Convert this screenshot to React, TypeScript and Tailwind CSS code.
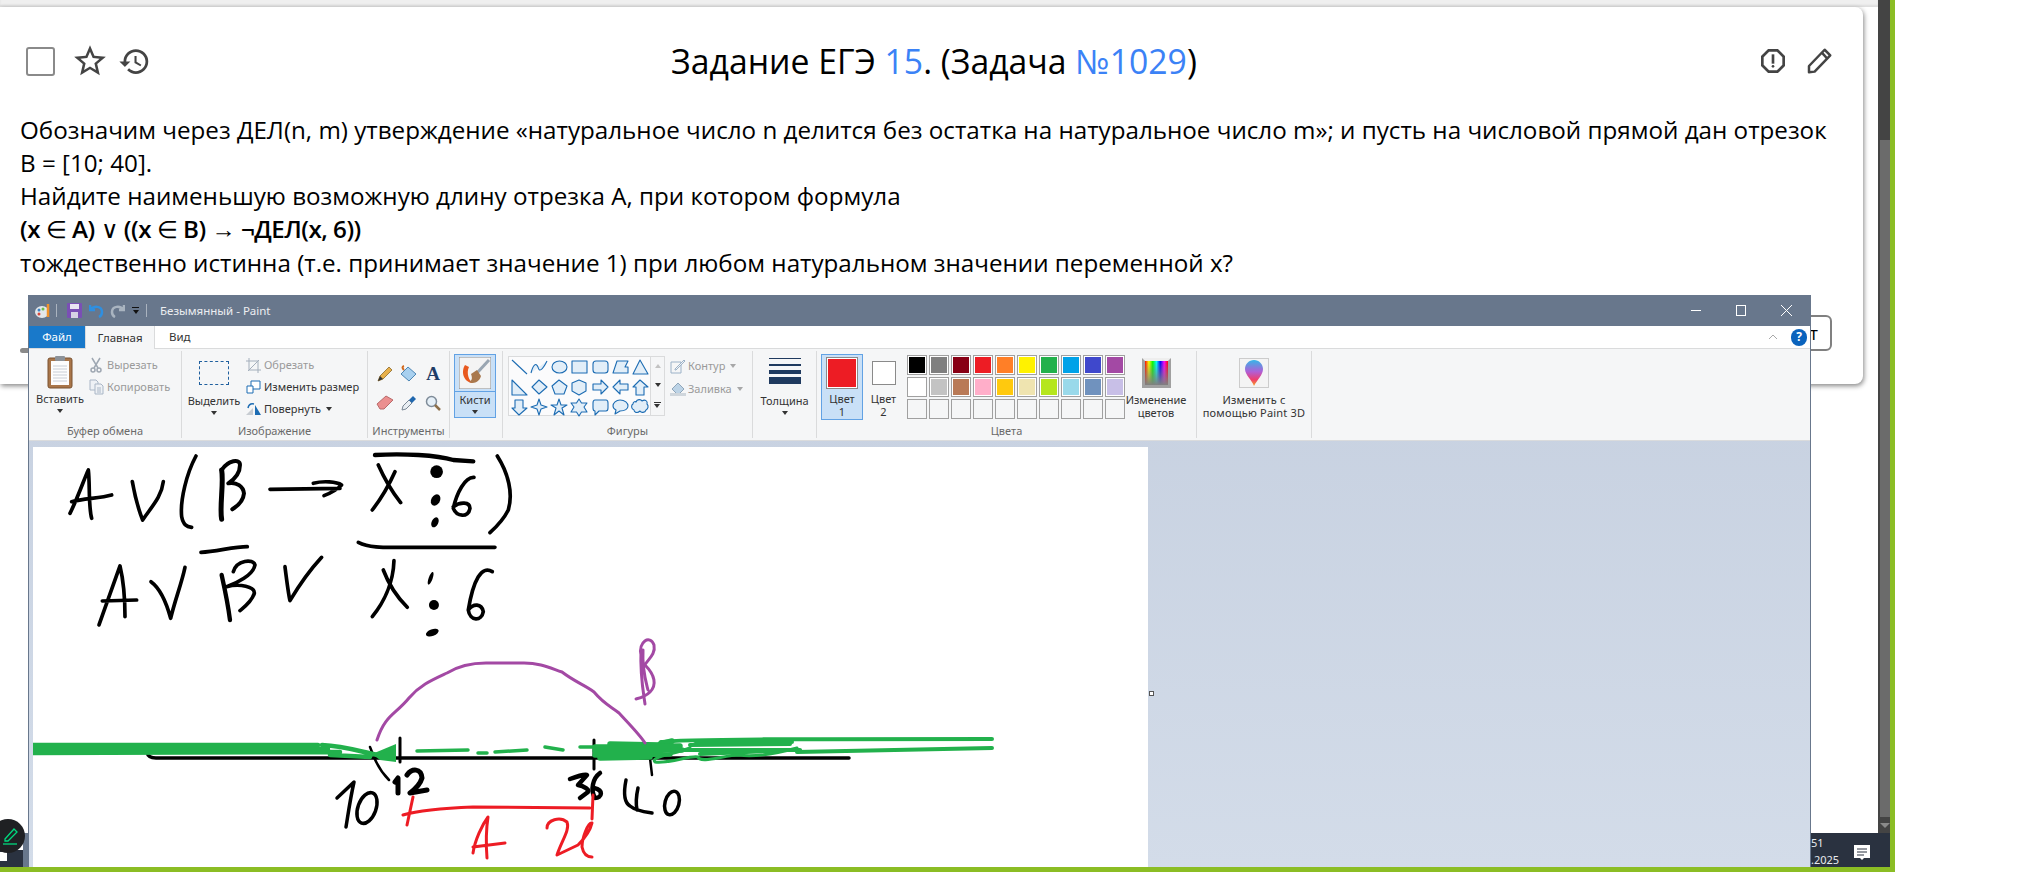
import type { ReactNode } from 'react';
import { MdHistory, MdOutlineReport, MdStarBorder } from 'react-icons/md';

const row1 = ['#000000', '#7f7f7f', '#880015', '#ed1c24', '#ff7f27', '#fff200', '#22b14c', '#00a2e8', '#3f48cc', '#a349a4'];
const row2 = ['#ffffff', '#c3c3c3', '#b97a57', '#ffaec9', '#ffc90e', '#efe4b0', '#b5e61d', '#99d9ea', '#7092be', '#c8bfe7'];
const row3 = ['', '', '', '', '', '', '', '', '', ''];

// paths of the gallery shapes, each on a 20x20 box
const shapes = [
  'M3 3L18 17',
  'M2 16C4 8 7 5 9 10C10 15 13 14 18 4',
  'M3 10a7.500 6 0 1 0 15 0a7.500 6 0 1 0 -15 0Z',
  'M3 4H18V16H3Z',
  'M6 4H15Q18 4 18 7V13Q18 16 15 16H6Q3 16 3 13V7Q3 4 6 4Z',
  'M3 16L7 4H18L15 10H18V16Z',
  'M10 3L18 17H3Z',
  'M3 3L18 18H3Z',
  'M10 3L18 10L10 17L3 10Z',
  'M10 3L18 9L15 17H6L3 9Z',
  'M10 3L17 6V14L10 18L3 14V6Z',
  'M3 7H11V3L18 10L11 17V13H3Z',
  'M18 7H10V3L3 10L10 17V13H18Z',
  'M10 3L18 10H14V18H6V10H3Z',
  'M6 3H14V11H18L10 18L3 11H6Z',
  'M10 2L12 8L18 10L12 12L10 18L8 12L2 10L8 8Z',
  'M10 2L12 8H18L13 11L15 18L10 14L5 18L7 11L2 8H8Z',
  'M10 2L12.500 6H18L15 10L18 15H12.500L10 19L7.500 15H2L5 10L2 6H7.500Z',
  'M5 3H16Q18 3 18 6V11Q18 14 16 14H9L5 18V14Q3 14 3 11V6Q3 3 5 3Z',
  'M10 3C15 3 18 6 18 9C18 12 15 14 10 14L5 17L6 13C4 12 3 11 3 9C3 6 6 3 10 3Z',
  'M6 5C7 2 11 2 12 4C15 2 18 4 17 7C19 9 18 12 16 13C15 16 11 16 10 14C7 17 4 15 4 13C1 12 1 8 3 7C3 5 5 4 6 5Z',
];

function Ink({ d, w = 11, c = '#000000' }: { d: string; w?: number; c?: string }) {
  return <path d={d} fill="none" stroke={c} strokeWidth={w} strokeLinecap="round" strokeLinejoin="round" />;
}

function Drawing() {
  return (
    <svg className="absolute left-0 top-0" width="1115" height="420" viewBox="33 447 1115 420">
      {/* formula lines, in 3x coordinates */}
      <g transform="translate(20 440) scale(0.3333)">
        <Ink d="M150 220C175 170 195 110 205 90C210 130 205 200 215 235M155 185C190 175 240 175 275 165" />
        <Ink d="M337 125C345 170 360 220 368 240C395 200 425 170 430 125" />
        <Ink d="M528 48C500 100 480 180 485 230C490 255 500 260 515 262" />
        <Ink d="M605 90C612 130 598 200 605 238" w={15} />
        <Ink d="M605 90C625 60 660 55 660 75C660 100 640 120 625 130C650 125 670 140 672 160C670 185 650 200 637 208" w={12} />
        <Ink d="M750 148L960 145M880 130C910 122 950 125 965 135C950 150 930 160 912 167" />
        <Ink d="M1075 75C1095 120 1120 160 1142 188M1125 95C1105 140 1080 180 1057 210" />
        <Ink d="M1065 45C1150 40 1250 45 1300 60L1360 64" w={13} />
        <ellipse cx="1250" cy="95" rx="19" ry="19" />
        <ellipse cx="1247" cy="180" rx="13" ry="18" transform="rotate(30 1247 180)" />
        <ellipse cx="1245" cy="247" rx="10" ry="16" transform="rotate(25 1245 247)" />
        <Ink d="M1362 112C1335 110 1310 160 1300 205C1310 230 1345 235 1350 205C1350 185 1320 185 1300 200" />
        <Ink d="M1432 48C1465 100 1480 160 1465 210C1450 240 1430 260 1410 278" />
        <Ink d="M237 555C260 490 285 420 300 378C310 420 315 480 315 530M247 483L350 480" />
        <Ink d="M393 425C420 445 440 490 452 535C465 480 485 430 495 382" />
        <Ink d="M543 337C590 335 640 320 682 320" />
        <Ink d="M605 405C615 450 625 500 630 540" w={13} />
        <Ink d="M640 395C650 360 700 355 705 375C700 405 650 430 620 440C660 430 705 440 703 460C695 485 675 500 660 512" />
        <Ink d="M795 380C800 420 805 460 810 482C835 440 870 390 905 352" />
        <Ink d="M1015 307C1050 325 1100 322 1150 322L1425 322" />
        <Ink d="M1090 390C1105 430 1130 470 1162 502M1122 362C1120 430 1090 490 1057 530" />
        <ellipse cx="1232" cy="415" rx="6" ry="20" transform="rotate(20 1232 415)" />
        <ellipse cx="1242" cy="495" rx="15" ry="15" />
        <ellipse cx="1237" cy="578" rx="20" ry="10" transform="rotate(-20 1237 578)" />
        <Ink d="M1417 395C1385 375 1360 420 1345 510C1350 545 1385 545 1390 515C1385 490 1360 490 1345 510" />
      </g>
      {/* number line */}
      <Ink d="M147 752Q148 758 156 758L849 758" w={3.500} />
      <Ink d="M400 738V762M594 740V769" w={3} />
      <Ink d="M370 747L374 757C378 767 384 775 389 780M650 758L652 775" w={2.500} />
      <Ink d="M33 745L318 745M33 749L328 749M33 753L340 752M322 745C345 746 362 752 378 755M330 755L370 757" w={4.500} c="#22b14c" />
      <path d="M372 754L396 744V762L380 760Z" fill="#22b14c" />
      <Ink d="M417 751L468 750M478 753L487 753M495 752L527 750M545 747L563 750M580 747L592 747" w={3.500} c="#22b14c" />
      <Ink d="M595 747L680 746M595 751L682 750M595 755L670 754M600 758L650 757M610 744L660 745M660 744L672 741" w={5.500} c="#22b14c" />
      <Ink d="M661 742C680 739 800 739 992 739M695 741L792 742M690 745L790 744M797 752L992 748M672 750L800 750M700 754L770 751" w={4} c="#22b14c" />
      <Ink d="M690 748C670 755 650 757 655 762C670 764 690 755 698 757C700 764 725 755 739 755C750 757 770 755 797 748" w={3} c="#22b14c" />
      <Ink d="M377 740C385 715 395 715 409 698C420 685 432 680 447 673C460 665 475 663 486 663H524C540 663 550 668 562 672C575 682 585 685 594 692C605 705 612 707 619 713C630 725 640 735 645 743" w={3} c="#a349a4" />
      <Ink d="M641 650C640 675 643 690 645 704M643 650C642 670 646 682 648 690M641 655C638 642 650 634 654 645C656 655 647 660 645 665C655 675 657 685 650 692C645 697 640 698 636 699" w={3} c="#a349a4" />
      {/* labels */}
      <Ink d="M337 798L354 782C350 800 348 815 346 827" w={3.500} />
      <ellipse cx="367" cy="808" rx="9" ry="16" fill="none" stroke="#000000" strokeWidth="3.500" transform="rotate(20 367 808)" />
      <Ink d="M395 782L398 778V793M407 775C412 768 421 768 422 778C420 785 414 790 410 793L427 790" w={5} />
      <Ink d="M570 779C578 776 586 774 587 775L578 785C584 786 590 790 588 792L580 798" w={4.500} />
      <Ink d="M600 773C593 778 590 790 595 798C602 798 604 790 594 788" w={4.500} />
      <Ink d="M626 780C623 795 625 803 630 806C636 811 645 812 652 813M638 788C636 797 636 805 637 810" w={3.500} />
      <ellipse cx="672" cy="803" rx="7" ry="12" fill="none" stroke="#000000" strokeWidth="3.500" transform="rotate(15 672 803)" />
      <Ink d="M413 797L407 825M403 815C420 810 447 808 473 807L590 808M593 795L592 819" w={3} c="#ed1c24" />
      <Ink d="M473 853C475 840 482 825 488 817C486 830 486 845 487 858M473 847L505 843" w={3} c="#ed1c24" />
      <Ink d="M547 828C547 820 560 816 567 822C570 830 562 840 557 855L578 845C585 838 590 832 592 823C588 822 582 838 582 847C583 852 586 857 592 857" w={3} c="#ed1c24" />
    </svg>
  );
}

function Caret() {
  return <span className="h-0 w-0 border-x-[3.500px] border-t-[4px] border-x-transparent border-t-[#333333]" />;
}

function Group({ w, label, children }: { w: string; label: string; children: ReactNode }) {
  return (
    <div className={`${w} mt-[2px] flex h-[87px] flex-col border-r border-[#dadbdc]`}>
      <div className="flex h-[73px] pt-[3px]">{children}</div>
      <div className="text-center text-[11px] leading-[14px] text-[#6a6a6a]">{label}</div>
    </div>
  );
}

function BigLabel({ lines, caret }: { lines: string[]; caret?: boolean }) {
  return (
    <div className="flex flex-col items-center text-center leading-[13px]">
      {lines.map((l) => (
        <span key={l} className="whitespace-nowrap">{l}</span>
      ))}
      {caret && <span className="mt-[4px] flex"><Caret /></span>}
    </div>
  );
}

function SmallItem({ icon, label, off, caret }: { icon: ReactNode; label: string; off?: boolean; caret?: boolean }) {
  return (
    <div className={`flex h-[22px] items-center gap-[3px] whitespace-nowrap ${off ? 'text-[#9a9a9a]' : 'text-[#333333]'}`}>
      <span className="flex w-4 justify-center">{icon}</span>
      {label}
      {caret && <span className="ml-[2px] flex"><Caret /></span>}
    </div>
  );
}

function Ribbon() {
  return (
    <div className="flex h-[92px] border-b border-[#dadbdc] bg-[#f5f6f7] text-[11px] text-[#333333]">
      <Group w="w-[153px]" label="Буфер обмена">
        <div className="ml-[2px] flex w-[58px] flex-col items-center">
          <svg width="28" height="34" viewBox="0 0 28 34" className="mt-[1px] mb-[3px]">
            <rect x="2" y="3" width="24" height="30" rx="2" fill="#a9764a" stroke="#7a5230" />
            <rect x="5" y="6" width="18" height="24" fill="#fdfdfd" />
            <path d="M7 11H21M7 14H21M7 17H21M7 20H21M7 23H21M7 26H21" stroke="#c9ced6" />
            <rect x="9" y="1" width="10" height="5" rx="1" fill="#8d9298" />
          </svg>
          <BigLabel lines={['Вставить']} caret />
        </div>
        <div className="-ml-[1px] flex flex-col">
          <SmallItem off label="Вырезать" icon={
            <svg width="12" height="16" viewBox="0 0 12 16" fill="none" stroke="#9ea7b2" strokeWidth="1.500"><path d="M2 1L8 11M10 1L4 11" /><circle cx="3" cy="13" r="2" /><circle cx="9" cy="13" r="2" /></svg>
          } />
          <SmallItem off label="Копировать" icon={
            <svg width="15" height="16" viewBox="0 0 15 16" fill="#eef1f5" stroke="#a9b6c6"><path d="M1 1H7L9 3V11H1Z" /><path d="M6 5H12L14 7V15H6Z" /><path d="M8 9H12M8 11H12M8 13H12" /></svg>
          } />
        </div>
      </Group>
      <Group w="w-[186px]" label="Изображение">
        <div className="ml-[2px] flex w-[60px] flex-col items-center">
          <div className="mt-[7px] mb-[9px] h-[24px] w-[30px] border border-dashed border-[#1e5f9e]" />
          <BigLabel lines={['Выделить']} caret />
        </div>
        <div className="ml-[1px] flex flex-col">
          <SmallItem off label="Обрезать" icon={
            <svg width="15" height="15" viewBox="0 0 15 15" fill="none" stroke="#a4afbc"><path d="M3 0V12H15M0 3H12V15M2 13L13 2" /></svg>
          } />
          <SmallItem label="Изменить размер" icon={
            <svg width="15" height="14" viewBox="0 0 15 14" fill="#ffffff" stroke="#1c6cb3"><path d="M5 1H14V9H5Z" /><path d="M1 6H7V13H1Z" /></svg>
          } />
          <SmallItem caret label="Повернуть" icon={
            <svg width="15" height="14" viewBox="0 0 15 14"><path d="M0 13L7 13L7 6Z" fill="#c7ccd2" /><path d="M9 13H15L9 3Z" fill="#1c6cb3" /><path d="M2 6Q3 1 8 2" fill="none" stroke="#1c6cb3" strokeWidth="1.500" /></svg>
          } />
        </div>
      </Group>
      <Group w="w-[82px]" label="Инструменты">
        <div className="mt-[5px] ml-[5px] grid h-[58px] w-[72px] grid-cols-3 grid-rows-2 place-items-center">
          <svg width="16" height="16" viewBox="0 0 16 16"><path d="M1 15L3 10L12 1L15 4L6 13Z" fill="#e8b04a" stroke="#8a6a2a" strokeWidth="0.800" /><path d="M1 15L3 10L6 13Z" fill="#333333" /></svg>
          <svg width="18" height="18" viewBox="0 0 18 18"><path d="M1 9L8 2L16 9L9 16Z" fill="#a8d0ef" stroke="#4d86b5" /><path d="M4 5Q1 2 4 1" fill="none" stroke="#d2691e" strokeWidth="2" /></svg>
          <span className="font-['Liberation_Serif',serif] text-[19px] font-bold leading-none text-[#1f3c66]">A</span>
          <svg width="18" height="15" viewBox="0 0 18 15"><path d="M1 9L10 1L17 5L8 14L4 14Z" fill="#eb8f8f" stroke="#b86a6a" /></svg>
          <svg width="16" height="16" viewBox="0 0 16 16"><path d="M1 15L2 11L8 5L11 8L5 14Z" fill="#e9eef3" stroke="#7b8895" /><path d="M8 5L12 1L15 4L11 8Z" fill="#2067ae" /></svg>
          <svg width="16" height="16" viewBox="0 0 16 16" fill="none"><circle cx="6.500" cy="6.500" r="5" fill="#e6f0f8" stroke="#7f8c99" strokeWidth="1.500" /><path d="M10 10L15 15" stroke="#8d6f4a" strokeWidth="2.500" /></svg>
        </div>
      </Group>
      <Group w="w-[53px]" label="">
        <div className="ml-[4px] h-[64px] w-[42px] border border-[#62a2e4] bg-[#c9e0f7]">
          <div className="flex h-[37px] items-center justify-center border-b border-[#62a2e4]">
            <svg width="32" height="32" viewBox="0 0 32 32">
              <rect width="32" height="32" fill="#f4f4f4" stroke="#8a8a8a" />
              <path d="M6 8C1 16 6 26 14 26C10 24 7 16 10 10Z" fill="#e8591f" />
              <path d="M30 3L18 16" stroke="#9aa6b2" strokeWidth="3" />
              <path d="M12 17L18 13L22 19C20 26 14 27 10 25C14 23 13 20 12 17Z" fill="#a9784d" />
            </svg>
          </div>
          <div className="mt-[1px]"><BigLabel lines={['Кисти']} caret /></div>
        </div>
      </Group>
      <Group w="w-[250px]" label="Фигуры">
        <div className="mt-[2px] ml-[5px] flex h-[60px]">
          <div className="grid h-[60px] w-[143px] grid-cols-7 border border-[#dadbdc] bg-[#fbfbfc]">
            {shapes.map((d) => (
              <svg key={d} width="20" height="20" viewBox="0 0 20 20">
                <path d={d} fill="#e2eef8" stroke="#1c6cb3" strokeWidth="1.100" strokeLinejoin="round" />
              </svg>
            ))}
          </div>
          <div className="flex h-[60px] w-[14px] flex-col items-center justify-around border border-l-0 border-[#dadbdc] text-[#555555]">
            <span className="h-0 w-0 border-x-[3.500px] border-b-[4px] border-x-transparent border-b-[#c2c2c2]" />
            <Caret />
            <span className="flex flex-col gap-[1px]"><span className="h-px w-[7px] bg-[#333333]" /><Caret /></span>
          </div>
        </div>
        <div className="mt-0 ml-[5px] flex flex-col text-[#9a9a9a]">
          <div className="flex h-[24px] items-center gap-[2px]">
            <svg width="16" height="16" viewBox="0 0 16 16" fill="none" stroke="#9cb2c8"><path d="M1 4H11V15H1Z" /><path d="M5 11L14 2L15 3L6 12H5Z" fill="#f2f4f6" /></svg>
            <span>Контур</span><span className="ml-[3px] flex opacity-40"><Caret /></span>
          </div>
          <div className="flex h-[22px] items-center gap-[2px]">
            <svg width="16" height="16" viewBox="0 0 16 16"><path d="M2 8L8 2L14 8L8 14Z" fill="#bcd3e6" stroke="#8fa6ba" /><rect y="12" width="16" height="3" fill="#cfd6dc" /></svg>
            <span>Заливка</span><span className="ml-[3px] flex opacity-40"><Caret /></span>
          </div>
        </div>
      </Group>
      <Group w="w-[64px]" label="">
        <div className="flex w-full flex-col items-center">
          <div className="mt-[4px] mb-[10px] flex w-[32px] flex-col">
            <div className="h-px bg-[#1f3a5f]" />
            <div className="mt-[5px] h-[2px] bg-[#1f3a5f]" />
            <div className="mt-[4px] h-[4px] bg-[#1f3a5f]" />
            <div className="mt-[3px] h-[7px] bg-[#1f3a5f]" />
          </div>
          <BigLabel lines={['Толщина']} caret />
        </div>
      </Group>
      <Group w="w-[380px]" label="Цвета">
        <div className="ml-[4px] flex h-[66px] w-[42px] flex-col items-center border border-[#62a2e4] bg-[#c9e0f7] pt-[2px]">
          <div className="mb-[3px] flex h-[32px] w-[32px] items-center justify-center border border-[#8a8a8a] bg-white">
            <div className="h-[28px] w-[28px] bg-[#ed1c24]" />
          </div>
          <BigLabel lines={['Цвет', '1']} />
        </div>
        <div className="flex w-[41px] flex-col items-center pt-[7px]">
          <div className="mb-[7px] h-[24px] w-[24px] border border-[#8a8a8a] bg-white" />
          <BigLabel lines={['Цвет', '2']} />
        </div>
        <div className="ml-[3px] mt-[1px] flex flex-col gap-[2px]">
          {[row1, row2, row3].map((row, r) => (
            <div key={r} className="flex gap-[2px]">
              {row.map((c, i) => (
                <div key={i} className="flex h-[20px] w-[20px] items-center justify-center border border-[#a0a0a0] bg-white">
                  {c ? <div className="h-[16px] w-[16px]" style={{ backgroundColor: c }} /> : <div className="h-[18px] w-[18px] bg-[#f5f6f7]" />}
                </div>
              ))}
            </div>
          ))}
        </div>
        <div className="ml-[2px] flex w-[58px] flex-col items-center">
          <div className="mt-[4px] mb-[5px] h-[30px] w-[29px] border-[3px] border-[#a0a0a0] border-t-[#eeeeee] bg-[linear-gradient(to_bottom,transparent,#808080),linear-gradient(to_right,#f00,#ff0,#0f0,#0ff,#00f,#f0f,#f00)]" />
          <BigLabel lines={['Изменение', 'цветов']} />
        </div>
      </Group>
      <Group w="w-[115px]" label="">
        <div className="flex w-full flex-col items-center">
          <div className="mt-[4px] mb-[5px] flex h-[30px] w-[30px] items-center justify-center border border-[#cccccc] bg-[#f4f4f4]">
            <svg width="18" height="26" viewBox="0 0 18 26">
              <defs>
                <linearGradient id="balloon" x1="0" y1="0" x2="0" y2="1">
                  <stop offset="0" stopColor="#35b6e8" />
                  <stop offset="0.450" stopColor="#b05fd6" />
                  <stop offset="0.750" stopColor="#ef3f6e" />
                  <stop offset="1" stopColor="#f5a623" />
                </linearGradient>
              </defs>
              <path d="M9 0C14 0 18 4 18 9C18 15 12 20 9 26C7 20 0 15 0 9C0 4 4 0 9 0Z" fill="url(#balloon)" />
            </svg>
          </div>
          <span className="tracking-[0.2px]"><BigLabel lines={['Изменить с', 'помощью Paint 3D']} /></span>
        </div>
      </Group>
    </div>
  );
}

function PaintWindow() {
  return (
    <div className="absolute left-[28px] top-[295px] flex h-[572px] w-[1783px] flex-col border-x border-[#68778c] bg-gradient-to-b from-[#c5cfdf] to-[#d3dce9] font-['Noto_Sans',sans-serif]">
      <div className="-mx-px flex h-[31px] items-center bg-[#68778c] pl-[7px] text-[11.500px] text-[#eceef1]">
        <svg width="16" height="16" viewBox="0 0 16 16">
          <ellipse cx="7" cy="9" rx="7" ry="6" fill="#e3e7ea" />
          <circle cx="4" cy="7" r="1.500" fill="#3b82c4" />
          <circle cx="8" cy="6" r="1.500" fill="#6abf4b" />
          <circle cx="4" cy="11" r="1.500" fill="#d9483b" />
          <path d="M13 1V14" stroke="#f0922b" strokeWidth="2.500" />
        </svg>
        <span className="ml-[5px] h-[13px] w-px bg-[#aab3bf]" />
        <svg className="ml-[10px]" width="15" height="15" viewBox="0 0 15 15">
          <rect width="15" height="15" rx="1" fill="#7a4fb5" />
          <rect x="3" y="1" width="9" height="5" fill="#e8e4f2" />
          <rect x="4" y="9" width="7" height="6" fill="#d6d2e4" />
        </svg>
        <svg className="ml-[7px]" width="15" height="14" viewBox="0 0 15 14" fill="none"><path d="M1 1V6H6M1 6C5 1 13 2 13 8C13 10 12 12 10 13" stroke="#2f8fe0" strokeWidth="2.500" /></svg>
        <svg className="ml-[6px]" width="15" height="14" viewBox="0 0 15 14" fill="none"><path d="M14 1V6H9M14 6C10 1 2 2 2 8C2 10 3 12 5 13" stroke="#a9b4c0" strokeWidth="2.500" /></svg>
        <span className="ml-[7px] flex flex-col items-center gap-[2px]"><span className="h-px w-[7px] bg-[#111111]" /><span className="h-0 w-0 border-x-[3.500px] border-t-[4px] border-x-transparent border-t-[#111111]" /></span>
        <span className="ml-[7px] h-[13px] w-px bg-[#aab3bf]" />
        <span className="ml-[13px]">Безымянный - Paint</span>
        <div className="ml-auto flex items-center pr-[19px]">
          <span className="h-px w-[10px] bg-white" />
          <span className="ml-[35px] h-[11px] w-[10px] border border-white" />
          <svg className="ml-[35px]" width="11" height="11" viewBox="0 0 11 11" stroke="#ffffff"><path d="M0 0L11 11M11 0L0 11" /></svg>
        </div>
      </div>
      <div className="flex h-[23px] items-stretch border-b border-[#dadbdc] bg-white text-[11.500px] text-[#333333]">
        <div className="flex w-[56px] items-center justify-center bg-[#1979ca] text-white">Файл</div>
        <div className="-mb-px flex w-[70px] items-center justify-center border-x border-[#dadbdc] bg-[#f5f6f7]">Главная</div>
        <div className="ml-[6px] flex items-center px-[8px]">Вид</div>
        <div className="ml-auto flex items-center pr-[3px]">
          <svg width="10" height="6" viewBox="0 0 10 6" fill="none" stroke="#a8a8a8"><path d="M1 5L5 1L9 5" /></svg>
          <span className="ml-[13px] flex h-[17px] w-[16px] items-center justify-center rounded-full bg-[#0a63bd] text-[12px] font-bold text-white">?</span>
        </div>
      </div>
      <Ribbon />
      <div className="relative mt-[6px] ml-[4px] h-[420px] w-[1115px] bg-white">
        <Drawing />
        <span className="absolute left-[1116px] top-[244px] h-[5px] w-[5px] border border-[#555555] bg-white" />
      </div>
    </div>
  );
}

// ∈ and → come from a thin fallback font in the bold line
function Sym({ children }: { children: ReactNode }) {
  return <span className="font-['Liberation_Serif',serif] font-normal">{children}</span>;
}

export default function App() {
  return (
    <div className="relative flex h-[873px] w-[2035px] overflow-hidden bg-white font-['Open_Sans',sans-serif] text-black">
      <div className="flex h-[872px] w-[1895px] border-r-[5px] border-b-[5px] border-[#8bbd24]">
        <main className="flex w-[1878px] flex-col bg-white">
          <div className="h-[7px] bg-[#efefef] shadow-[inset_0_-2px_2px_#dddddd]" />
          <section className="h-[377px] w-[1863px] rounded-r-lg bg-white px-5 pt-[33px] shadow-[1px_2px_5px_#888888]">
            <header className="flex h-[42px] items-center">
              <div className="ml-[6px] h-[29px] w-[29px] rounded-[3px] border-2 border-[#8a8a8a]" />
              <MdStarBorder size={38} className="ml-[16px] text-[#444444]" />
              <MdHistory size={33} className="ml-[9px] text-[#444444]" />
              <h1 className="flex-1 pr-[40px] text-center text-[33.750px] font-normal leading-[42px]">
                Задание ЕГЭ <span className="text-[#3b82f6]">15</span>. (Задача <span className="text-[#3b82f6]">№1029</span>)
              </h1>
              <MdOutlineReport size={32} className="text-[#444444]" />
              <svg className="ml-[15px] mr-[9px]" width="30" height="30" viewBox="0 0 24 24" fill="none" stroke="#444444" strokeWidth="2" strokeLinejoin="round">
                <path d="M4 21V16L16.500 3L21 7.500L8.500 20.500Z" />
                <path d="M14.500 5.500L18.500 10" />
              </svg>
            </header>
            <div className="mt-[31px] text-[24.200px] leading-[33px]">
              <p className="whitespace-nowrap">Обозначим через ДЕЛ(n, m) утверждение «натуральное число n делится без остатка на натуральное число m»; и пусть на числовой прямой дан отрезок</p>
              <p>B = [10; 40].</p>
              <p>Найдите наименьшую возможную длину отрезка А, при котором формула</p>
              <p className="font-semibold tracking-[-0.5px]">
                (x <Sym>∈</Sym> A) <Sym>∨</Sym> ((x <Sym>∈</Sym> B) <Sym>→</Sym> ¬ДЕЛ(x, 6))
              </p>
              <p>тождественно истинна (т.е. принимает значение 1) при любом натуральном значении переменной x?</p>
            </div>
            <div className="mt-[36px] flex justify-end">
              <div className="mr-[11px] flex h-[36px] w-[120px] items-center justify-end rounded-md border-2 border-[#808080] pr-[12px] text-[18px]">т</div>
            </div>
          </section>
        </main>
        <div className="flex w-[12px] flex-col border-l-2 border-[#444444]">
          <div className="h-[140px] bg-[#444444]" />
          <div className="flex-1 bg-[#6b6b6b]" />
          <div className="flex h-[50px] justify-center bg-[#444444] pt-[6px]">
            <span className="h-0 w-0 border-x-[5px] border-t-[5px] border-x-transparent border-t-[#8a8a8a]" />
          </div>
        </div>
      </div>

      <PaintWindow />

      {/* bits of the taskbar that show around the Paint window */}
      <div className="absolute left-[1811px] top-[833px] flex h-[34px] w-[79px] bg-[#2a3240] pt-px font-['Noto_Sans',sans-serif] text-[11px] leading-[17px] text-[#e8eaee]">
        <div className="w-[28px]">
          <div>51</div>
          <div className="whitespace-nowrap">.2025</div>
        </div>
        <svg className="ml-[15px] mt-[11px]" width="17" height="17" viewBox="0 0 17 17">
          <path d="M0 0H16V13H10L8 15L6 13H0Z" fill="#ffffff" />
          <path d="M3 4H13M3 7H13M3 10H10" stroke="#2a3240" />
        </svg>
      </div>
      <div className="absolute left-[20px] top-[348px] h-[5px] w-[8px] rounded-l bg-[#8a8a8a]" />
      <div className="absolute left-[23px] top-[833px] h-[34px] w-[5px] bg-[#68778c]" />
      <div className="absolute left-0 top-[850px] h-[17px] w-[23px] bg-[#2a3240]">
        <div className="mt-[2px] h-[9px] w-[7px] bg-white" />
      </div>
      <div className="absolute -left-[9px] top-[819px] flex h-[34px] w-[34px] items-center justify-center rounded-full bg-[#1f2023] pl-[6px]">
        <svg width="16" height="18" viewBox="0 0 16 18" fill="none" stroke="#00d97e" strokeWidth="1.300">
          <path d="M2 12L11 2L14 5L5 14H2Z" />
          <path d="M0 17H14" />
        </svg>
      </div>
    </div>
  );
}
